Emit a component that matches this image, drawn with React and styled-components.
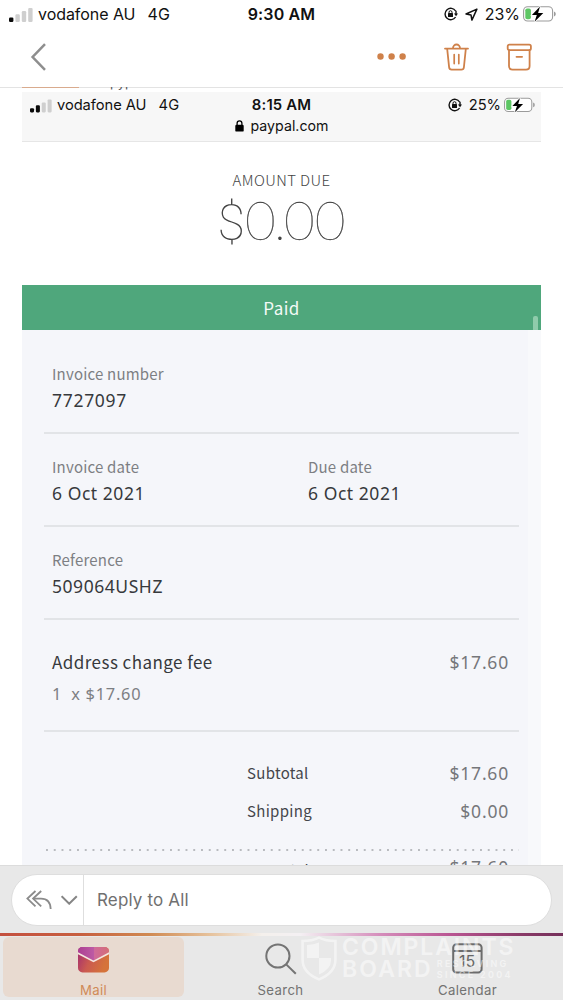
import React from "react";

// styles
import styled, { createGlobalStyle } from "styled-components";

const App = () => {
  return (
    <>
      <GlobalStyle />
      <Phone>
        <StatusBar>
          <Carrier>
            <Signal bars={1} />
            <span>vodafone AU</span>
            <span>4G</span>
          </Carrier>
          <Clock>9:30 AM</Clock>
          <StatusRight>
            <RotationLock />
            <LocationArrow />
            <span>23%</span>
            <Battery />
          </StatusRight>
        </StatusBar>

        <Toolbar>
          <BackIcon />
          <Actions>
            <DotsIcon />
            <TrashIcon />
            <ArchiveIcon />
          </Actions>
        </Toolbar>

        <Message>
          <Attachment>
            <CutOff>
              <span>pyp</span>
            </CutOff>
            <Browser>
              <StatusBar $small>
                <Carrier $small>
                  <Signal bars={2} />
                  <span>vodafone AU</span>
                  <span>4G</span>
                </Carrier>
                <Clock $small>8:15 AM</Clock>
                <StatusRight $small>
                  <RotationLock />
                  <span>25%</span>
                  <Battery />
                </StatusRight>
              </StatusBar>
              <Address>
                <LockIcon />
                paypal.com
              </Address>
            </Browser>

            <AmountDue>
              <AmountLabel>AMOUNT DUE</AmountLabel>
              <Amount>
                <Currency>$</Currency>0<Point>.</Point>00
              </Amount>
            </AmountDue>

            <PaidBanner>
              Paid
              <ScrollThumb />
            </PaidBanner>

            <Invoice>
              <Row>
                <Field>
                  <Label>Invoice number</Label>
                  <Value $spacing="0.7px">7727097</Value>
                </Field>
              </Row>
              <Row>
                <Field>
                  <Label>Invoice date</Label>
                  <Value>6 Oct 2021</Value>
                </Field>
                <Field>
                  <Label>Due date</Label>
                  <Value>6 Oct 2021</Value>
                </Field>
              </Row>
              <Row>
                <Field>
                  <Label>Reference</Label>
                  <Value>509064USHZ</Value>
                </Field>
              </Row>
              <ItemRow>
                <ItemLine>
                  <ItemName>Address change fee</ItemName>
                  <Price>$17.60</Price>
                </ItemLine>
                <Quantity>
                  <span>1</span>
                  <span>x $17.60</span>
                </Quantity>
              </ItemRow>
              <Totals>
                <TotalLine>
                  <TotalLabel>Subtotal</TotalLabel>
                  <Price>$17.60</Price>
                </TotalLine>
                <TotalLine>
                  <TotalLabel>Shipping</TotalLabel>
                  <Price>$0.00</Price>
                </TotalLine>
                <Dotted />
                <TotalLine $last>
                  <TotalLabel $drop>Total</TotalLabel>
                  <Price>$17.60</Price>
                </TotalLine>
              </Totals>
            </Invoice>
          </Attachment>
        </Message>

        <ReplyBar>
          <ReplyPill>
            <ReplyMenu>
              <ReplyAllIcon />
              <ChevronIcon />
            </ReplyMenu>
            <ReplyText>Reply to All</ReplyText>
          </ReplyPill>
        </ReplyBar>

        <Rainbow />

        <TabBar>
          <Tab $active>
            <MailIcon />
            <span>Mail</span>
          </Tab>
          <Tab>
            <SearchIcon />
            <span>Search</span>
          </Tab>
          <Tab>
            <CalendarIcon />
            <span>Calendar</span>
          </Tab>
          <Watermark>
            <ShieldIcon />
            <WatermarkText>
              <div className="top">COMPLAINTS</div>
              <div className="bottom">
                <b>BOARD</b>
                <small>
                  RESOLVING
                  <br />
                  SINCE 2004
                </small>
              </div>
            </WatermarkText>
          </Watermark>
        </TabBar>
      </Phone>
    </>
  );
};

// icons
const Signal = ({ bars }) => (
  <svg width="24" height="15" viewBox="0 0 24 15">
    {[0, 1, 2, 3].map((i) => (
      <rect
        key={i}
        x={i * 6.4}
        y={10.5 - i * 3.2}
        width="4.4"
        height={4.5 + i * 3.2}
        rx="1.2"
        fill={i < bars ? "#0a0a0a" : "#cfcfcf"}
      />
    ))}
  </svg>
);

const RotationLock = () => (
  <svg width="14" height="14" viewBox="0 0 14 14">
    <path
      d="M11.6 4A5.7 5.7 0 1 0 11.6 10"
      fill="none"
      stroke="#111"
      strokeWidth="1.4"
    />
    <path d="M12 3.8v3.2" fill="none" stroke="#111" strokeWidth="1.4" />
    <path d="M9.9 6.4h4.1l-1.9 2.9z" fill="#111" />
    <rect x="4" y="6.1" width="5" height="4" rx="0.6" fill="#111" />
    <path
      d="M5 6.5V5.2a1.5 1.5 0 0 1 3 0v1.3"
      fill="none"
      stroke="#111"
      strokeWidth="1"
    />
  </svg>
);

const LocationArrow = () => (
  <svg width="13" height="13" viewBox="0 0 13 13">
    <path
      d="M11.9 1.1L1 6l5 .9.9 5.2z"
      fill="none"
      stroke="#111"
      strokeWidth="1.5"
      strokeLinejoin="round"
    />
  </svg>
);

const Battery = () => (
  <svg width="33" height="16" viewBox="0 0 33 16">
    <rect
      x="0.6"
      y="0.8"
      width="29"
      height="14.2"
      rx="4"
      fill="#fff"
      stroke="#9b9b9b"
      strokeWidth="1.1"
    />
    <path d="M31 5.4q1.8.6 1.8 2.5T31 10.4z" fill="#9b9b9b" />
    <rect x="2.3" y="2.5" width="5.6" height="10.8" rx="1.8" fill="#5ec765" />
    <path
      d="M17 .6L8.9 9h4.9l-2.2 6.8L20.3 7h-5.2z"
      fill="#000"
      stroke="#fff"
      strokeWidth="1.4"
      paintOrder="stroke"
    />
  </svg>
);

const BackIcon = () => (
  <svg width="16" height="28" viewBox="0 0 16 28">
    <path d="M15 1.2L2.6 14 15 26.8" fill="none" stroke="#8e8e8e" strokeWidth="2.5" />
  </svg>
);

const DotsIcon = () => (
  <svg width="29" height="7" viewBox="0 0 29 7">
    <g fill="#cf814a">
      <circle cx="3.5" cy="3.5" r="3.2" />
      <circle cx="14.6" cy="3.5" r="3.2" />
      <circle cx="25.6" cy="3.5" r="3.2" />
    </g>
  </svg>
);

const TrashIcon = () => (
  <svg width="26" height="28" viewBox="0 0 26 28">
    <g fill="none" stroke="#cf814a" strokeWidth="1.8" strokeLinecap="round">
      <path d="M2 5.6h23" />
      <path d="M10 5.2a3.5 3.7 0 0 1 7 0" />
      <path d="M4.2 6l1.9 18.2q.2 2.4 2.6 2.4h9.6q2.4 0 2.6-2.4L22.8 6" />
      <path d="M11.2 11.6v9M15.8 11.6v9" strokeWidth="1.7" />
    </g>
  </svg>
);

const ArchiveIcon = () => (
  <svg width="26" height="28" viewBox="0 0 26 28">
    <g fill="none" stroke="#cf814a" strokeWidth="1.8" strokeLinecap="round">
      <rect x="1.7" y="1.6" width="23.2" height="5.6" rx="1.6" />
      <path d="M3 7.2V23q0 3.6 3.6 3.6H20q3.600 0 3.6-3.6V7.2" />
      <path d="M10.5 13.8h5.6" />
    </g>
  </svg>
);

const LockIcon = () => (
  <svg width="9" height="12" viewBox="0 0 9 12">
    <rect x="0.3" y="4.8" width="8.4" height="6.8" rx="1.2" fill="#000" />
    <path d="M2.1 5.2V3.3a2.4 2.4 0 0 1 4.8 0v1.9" fill="none" stroke="#000" strokeWidth="1.3" />
  </svg>
);

const ReplyAllIcon = () => (
  <svg width="27" height="20" viewBox="0 0 27 20">
    <g fill="none" stroke="#8b8b8b" strokeWidth="1.8">
      <path d="M9.5 1L1.4 8.6l8.1 7.8" />
      <path d="M15.2 1L7.1 8.6l8.1 7.8" />
      <path d="M7.3 8.6H15q9.3 0 9.7 10.4" />
    </g>
  </svg>
);

const ChevronIcon = () => (
  <svg width="18" height="10" viewBox="0 0 18 10">
    <path d="M.6 1.2l7.6 7.5 7.6-7.5" fill="none" stroke="#858585" strokeWidth="2" />
  </svg>
);

const MailIcon = () => (
  <svg width="31" height="26" viewBox="0 0 31 26">
    <defs>
      <linearGradient id="body" x1="0" y1="0" x2="1" y2="0.35">
        <stop offset="0" stopColor="#a02a72" />
        <stop offset="0.5" stopColor="#cb5a50" />
        <stop offset="1" stopColor="#d5733a" />
      </linearGradient>
      <linearGradient id="flap" x1="0" y1="0" x2="1" y2="0">
        <stop offset="0" stopColor="#ab3f93" />
        <stop offset="0.5" stopColor="#bd5aa4" />
        <stop offset="0.5" stopColor="#cf6a9c" />
        <stop offset="1" stopColor="#d46e78" />
      </linearGradient>
    </defs>
    <rect width="31" height="25.4" rx="4.5" fill="url(#body)" />
    <path d="M0 5.6V4.5Q0 0 4.5 0h22Q31 0 31 4.5v1.1L15.5 14z" fill="url(#flap)" />
    <path d="M-0.5 6L15.5 14.4 31.5 6" fill="none" stroke="#f5e6e0" strokeWidth="1.6" />
  </svg>
);

const SearchIcon = () => (
  <svg width="32" height="32" viewBox="0 0 32 32">
    <g fill="none" stroke="#747474" strokeWidth="2">
      <circle cx="12.9" cy="13" r="11.6" />
      <path d="M21.2 21.4l9.6 9.4" />
    </g>
  </svg>
);

const CalendarIcon = () => (
  <svg width="31" height="31" viewBox="0 0 31 31">
    <g fill="none" stroke="#6c6c6c" strokeWidth="2">
      <rect x="1.2" y="1.2" width="28.4" height="28.4" rx="3.4" />
      <path d="M1.2 8h28.4" />
    </g>
    <text
      x="15.2"
      y="24"
      textAnchor="middle"
      fontFamily="Inter, sans-serif"
      fontSize="16"
      letterSpacing="0"
      fill="#666"
    >
      15
    </text>
  </svg>
);

const ShieldIcon = () => (
  <svg width="36" height="45" viewBox="0 0 36 45">
    <path
      d="M18 1.6q7 3.4 16.4 3.4v19q0 12.6-16.4 19.4Q1.6 36.6 1.6 24V5Q11 5 18 1.6z"
      fill="none"
      stroke="#fff"
      strokeWidth="2.6"
    />
    <path d="M18 6.5V22H6V9q7-.2 12-2.5zM18 22h12v2.5Q30 33 18 38.6z" fill="#fff" />
  </svg>
);

// styled components
const GlobalStyle = createGlobalStyle`
  * {
    box-sizing: border-box;
  }

  body {
    margin: 0;
    background: #fff;
    font-family: Inter, sans-serif;
  }

  svg {
    display: block;
    flex: none;
  }
`;

const Phone = styled.div`
  display: flex;
  flex-direction: column;
  width: 563px;
  height: 1000px;
  overflow: hidden;
  background: #fff;
`;

const StatusBar = styled.div`
  display: grid;
  grid-template-columns: 1fr auto 1fr;
  align-items: center;
  flex: none;
  height: ${(p) => (p.$small ? "26px" : "28px")};
  padding: ${(p) => (p.$small ? "0 6px 0 8px" : "0 7px 0 9px")};
  font-size: 16px;
  color: #111;
  white-space: nowrap;
`;

const Carrier = styled.div`
  display: flex;
  align-items: center;
  font-size: ${(p) => (p.$small ? "14.7px" : "16px")};
  letter-spacing: ${(p) => (p.$small ? "-0.05px" : "-0.05px")};

  svg {
    width: ${(p) => (p.$small ? "22px" : "24px")};
    margin-right: 5px;
  }

  span + span {
    margin-left: 12px;
    letter-spacing: 0.3px;
  }
`;

const Clock = styled.div`
  margin-left: -2px;
  font-size: ${(p) => (p.$small ? "14.9px" : "16px")};
  font-weight: 600;
  letter-spacing: 0.15px;
`;

const StatusRight = styled.div`
  display: flex;
  align-items: center;
  justify-content: flex-end;
  font-size: ${(p) => (p.$small ? "14.7px" : "16px")};

  svg {
    margin-right: 7px;
  }

  span {
    margin-right: 3px;
  }

  svg:last-child {
    width: ${(p) => (p.$small ? "31px" : "33px")};
    margin-right: 0;
  }
`;

const Toolbar = styled.div`
  display: flex;
  align-items: center;
  justify-content: space-between;
  flex: none;
  height: 59px;
  padding: 0 31px 2px 30px;
`;

const Actions = styled.div`
  display: flex;
  align-items: center;
  gap: 37px;
`;

const Message = styled.div`
  flex: none;
  height: 778px;
  padding: 0 22px;
  overflow: hidden;
  background: linear-gradient(#e3e3e3, #e3e3e3) 0 0 / 100% 1px no-repeat;
`;

const Attachment = styled.div`
  display: flex;
  flex-direction: column;
  width: 519px;
`;

const CutOff = styled.div`
  flex: none;
  height: 5px;
  padding-left: 88px;
  overflow: hidden;
  font-size: 13px;
  line-height: 10px;
  color: #555;
  background: linear-gradient(#d9ab8e, #d9ab8e) 0 0 / 57px 1px no-repeat;

  span {
    display: block;
    margin-top: -10px;
  }
`;

const Browser = styled.div`
  flex: none;
  height: 50px;
  background: #f7f7f7;
  border-bottom: 1px solid #e6e6e6;
`;

const Address = styled.div`
  display: flex;
  align-items: center;
  justify-content: center;
  gap: 7px;
  height: 15px;
  font-size: 14.2px;
  color: #111;
`;

const AmountDue = styled.div`
  display: flex;
  flex-direction: column;
  align-items: center;
  height: 143px;
  padding-top: 28px;
`;

const AmountLabel = styled.div`
  font-family: "Noto Sans CJK SC", sans-serif;
  font-size: 15px;
  font-weight: 300;
  line-height: 20px;
  letter-spacing: 0.4px;
  color: #444;
`;

const Amount = styled.div`
  font-family: Lato, sans-serif;
  font-size: 53px;
  font-weight: 100;
  line-height: 60px;
  color: #444;
  -webkit-text-stroke: 0.4px #444;
`;

const Currency = styled.span`
  font-family: Roboto, sans-serif;
  font-size: 50px;
  -webkit-text-stroke: 0;
`;

const Point = styled.span`
  margin: 0 -2px;
  -webkit-text-stroke: 0;
`;

const PaidBanner = styled.div`
  position: relative;
  display: flex;
  align-items: center;
  justify-content: center;
  height: 45px;
  padding-bottom: 1px;
  font-family: "Noto Sans CJK SC", sans-serif;
  font-size: 17px;
  letter-spacing: 0.4px;
  color: #f3faf6;
  background: #4fa77c;
`;

const ScrollThumb = styled.i`
  position: absolute;
  right: 3px;
  bottom: 0;
  width: 5px;
  height: 14px;
  border-radius: 2px 2px 0 0;
  background: #8fcbab;
`;

const Invoice = styled.div`
  padding: 0 22px;
  background: linear-gradient(90deg, #f5f6fa 506px, #f8f9fb 506px);
`;

const Row = styled.div`
  display: grid;
  grid-template-columns: 256px 1fr;
  height: 93px;
  padding: 19px 8px 0;
  border-bottom: 2px solid #e2e4e7;

  &:first-child {
    height: 104px;
    padding-top: 30px;
  }
`;

const Field = styled.div`
  display: flex;
  flex-direction: column;
`;

const Label = styled.div`
  height: 27px;
  font-family: "Noto Sans CJK SC", sans-serif;
  font-size: 15px;
  line-height: 27px;
  letter-spacing: 0.2px;
  color: #7d7f83;
`;

const Value = styled.div`
  height: 27px;
  font-family: "Noto Sans", sans-serif;
  font-size: 17.5px;
  line-height: 27px;
  letter-spacing: ${(p) => p.$spacing || "0.55px"};
  color: #37393c;
`;

const ItemRow = styled.div`
  height: 112px;
  padding: 26px 8px 0;
  border-bottom: 2px solid #e2e4e7;
`;

const ItemLine = styled.div`
  display: flex;
  justify-content: space-between;
  height: 32px;
  padding-right: 2px;
`;

const ItemName = styled.div`
  font-family: "Noto Sans CJK SC", sans-serif;
  font-size: 17px;
  line-height: 32px;
  letter-spacing: 0.45px;
  color: #37393c;
`;

const Price = styled.div`
  font-family: "Noto Sans", sans-serif;
  font-size: 17.5px;
  line-height: 32px;
  letter-spacing: 0.8px;
  color: #75777a;
`;

const Quantity = styled.div`
  display: flex;
  gap: 9px;
  font-family: "Noto Sans", sans-serif;
  font-size: 16.4px;
  line-height: 32px;
  letter-spacing: 0.75px;
  color: #7d7f83;
`;

const Totals = styled.div`
  padding-top: 22px;
`;

const TotalLine = styled.div`
  display: flex;
  justify-content: space-between;
  height: 38px;
  padding: ${(p) => (p.$last ? "0 10px 0 229px" : "3px 10px 0 203px")};
`;

const TotalLabel = styled.div`
  padding-top: ${(p) => (p.$drop ? "3px" : "0")};
  font-family: "Noto Sans CJK SC", sans-serif;
  font-size: 15px;
  line-height: 32px;
  letter-spacing: 0.3px;
  color: #44464a;
`;

const Dotted = styled.div`
  height: 2px;
  margin: 19px 0 0 2px;
  background: radial-gradient(circle at 1px 1px, #b9bbbf 1px, transparent 1.2px)
    0 0 / 7.75px 2px;
`;

const ReplyBar = styled.div`
  flex: none;
  height: 68px;
  padding: 8px 11px 0;
  border-top: 1px solid #dcdcdc;
  background: #e8e8e8;
`;

const ReplyPill = styled.div`
  display: flex;
  width: 541px;
  height: 52px;
  border: 1px solid #dedede;
  border-radius: 26px;
  background: #fff;
`;

const ReplyMenu = styled.div`
  display: flex;
  align-items: center;
  gap: 8px;
  width: 72px;
  padding-left: 14px;
  border-right: 1px solid #dedede;
`;

const ReplyText = styled.div`
  padding-left: 13px;
  font-size: 17px;
  line-height: 50px;
  letter-spacing: 0.15px;
  color: #707070;
`;

const Rainbow = styled.div`
  flex: none;
  height: 3px;
  background: linear-gradient(
    90deg,
    #c4503f 0,
    #c75f3f 80px,
    #d08a52 150px,
    #e6c29c 210px,
    #f4f0ec 262px,
    #f4f0f3 300px,
    #d58dbb 380px,
    #b95592 450px,
    #8a3a68 520px,
    #74305a 563px
  );
`;

const TabBar = styled.div`
  position: relative;
  display: grid;
  grid-template-columns: 181px 181px 181px;
  column-gap: 6px;
  flex: none;
  height: 64px;
  padding: 1px 3px 3px;
  background: #e8e8e8;
`;

const Tab = styled.div`
  display: flex;
  flex-direction: column;
  align-items: center;
  height: 60px;
  border-radius: 6px;
  font-size: 13.2px;
  letter-spacing: 0.35px;
  color: ${(p) => (p.$active ? "#d08a58" : "#727272")};
  background: ${(p) => (p.$active ? "#e8dad0" : "transparent")};

  svg {
    margin-top: ${(p) => (p.$active ? "10px" : "6px")};
  }

  span {
    margin: auto 0 -1px;
    line-height: 15px;
  }
`;

const Watermark = styled.div`
  position: absolute;
  left: 301px;
  top: 0;
  display: flex;
  gap: 5px;
  color: #fff;
  opacity: 0.5;
`;

const WatermarkText = styled.div`
  font-weight: 600;
  white-space: nowrap;

  .top {
    font-size: 23px;
    line-height: 22px;
    letter-spacing: 1.9px;
  }

  .bottom {
    display: flex;
    align-items: center;
    gap: 4px;
    height: 22px;
  }

  b {
    font-size: 23px;
    font-weight: 600;
    letter-spacing: 2.1px;
  }

  small {
    font-size: 9px;
    line-height: 11px;
    letter-spacing: 2.3px;
  }
`;

export default App;
